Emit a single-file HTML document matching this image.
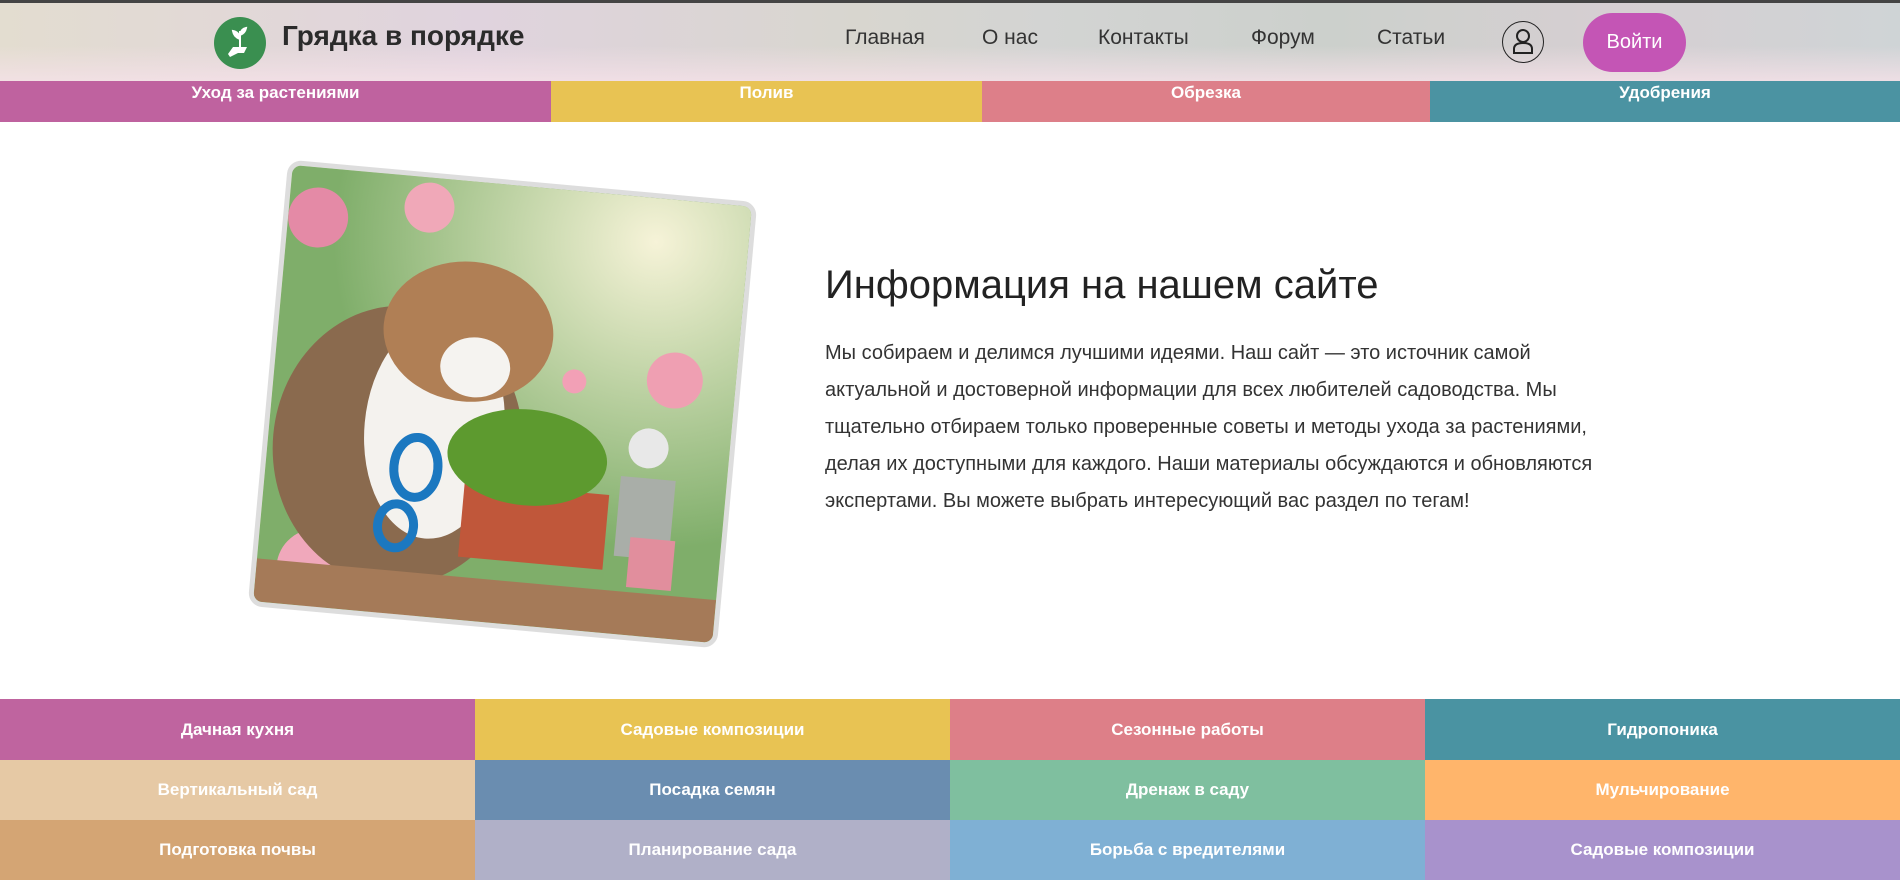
<!DOCTYPE html>
<html><head><meta charset="utf-8"><style>
*{margin:0;padding:0;box-sizing:border-box}
body{width:1900px;height:879px;overflow:hidden;background:#fff;font-family:"Liberation Sans","DejaVu Sans",sans-serif;position:relative}
.hdr{position:absolute;left:0;top:0;width:1900px;height:81px;border-top:3px solid #444;
background:linear-gradient(180deg,rgba(255,255,255,0) 55%,rgba(245,225,232,.8) 100%),linear-gradient(90deg,#e3ddd0 0%,#e0d3de 25%,#d8d6cf 45%,#d3d4d3 55%,#ccd0cc 70%,#d6cfd2 85%,#cfd4d6 100%)}
.logo{position:absolute;left:214px;top:17px;width:52px;height:52px;border-radius:50%;background:#3a8f50}
.brand{position:absolute;left:282px;top:20px;font-size:28px;font-weight:bold;color:#2b2b2b}
.nav{position:absolute;top:26px;font-size:21px;color:#333}
.user{position:absolute;left:1502px;top:21px;width:42px;height:42px;border-radius:50%;border:1.5px solid #222;z-index:2}
.btn{position:absolute;left:1583px;top:13px;width:103px;height:59px;border-radius:30px;background:#c455b5;color:#fff;font-size:20px;text-align:center;line-height:59px;z-index:2}
.tags{position:absolute;top:81px;left:0;height:41px;width:1900px;display:flex}
.tags div{height:41px;color:#fff;font-weight:bold;font-size:17px;text-align:center;line-height:24px}
.card{position:absolute;left:267px;top:180px;width:471px;height:448px;border:5px solid #ddd;border-radius:14px;transform:rotate(5.2deg);overflow:hidden;background:#9cbf7a}
h1{position:absolute;left:825px;top:263px;font-size:40px;font-weight:normal;color:#222}
p{position:absolute;left:825px;top:335px;width:792px;font-size:20px;line-height:37px;color:#333}
.grid{position:absolute;left:0;top:699px;width:1900px;display:grid;grid-template-columns:repeat(4,475px);grid-template-rows:61px 60px 60px}
.grid div{color:#fff;font-weight:bold;font-size:17px;display:flex;align-items:center;justify-content:center}
</style></head><body>
<div class="hdr"></div>
<div class="logo"><svg width="52" height="52" viewBox="0 0 52 52"><path d="M26 30 V14 M26 22 q-6-2-7-8 q6 1 7 8 M26 18 q5-2 6-7 q-5 1-6 7" stroke="#fff" stroke-width="2" fill="#fff"/><path d="M19 30 h14 l-3 6 h-6 l-8 4 l-2-3 z" fill="#fff"/></svg></div>
<div class="brand">Грядка в порядке</div>
<div class="nav" style="left:845px">Главная</div>
<div class="nav" style="left:982px">О нас</div>
<div class="nav" style="left:1098px">Контакты</div>
<div class="nav" style="left:1251px">Форум</div>
<div class="nav" style="left:1377px">Статьи</div>
<div class="user"><svg width="40" height="40" viewBox="0 0 40 40"><circle cx="20" cy="14" r="6" fill="none" stroke="#222" stroke-width="2"/><path d="M11 31 v-4 q0-6 9-6 q9 0 9 6 v4 z" fill="none" stroke="#222" stroke-width="2"/></svg></div>
<div class="btn">Войти</div>
<div class="tags">
<div style="width:551px;background:#bf629f">Уход за растениями</div>
<div style="width:431px;background:#e8c353">Полив</div>
<div style="width:448px;background:#dd7f89">Обрезка</div>
<div style="width:470px;background:#4b93a2">Удобрения</div>
</div>
<div class="card"><svg width="461" height="438" viewBox="0 0 461 438">
<defs><radialGradient id="l" cx="0.8" cy="0.1" r="0.7"><stop offset="0" stop-color="#f6f3d8"/><stop offset="1" stop-color="#7fae6a"/></radialGradient></defs>
<rect width="461" height="438" fill="url(#l)"/>
<circle cx="30" cy="50" r="30" fill="#e48aa6"/><circle cx="140" cy="30" r="25" fill="#f0a8b8"/><circle cx="400" cy="180" r="28" fill="#ef9fb2"/><circle cx="380" cy="250" r="20" fill="#e8e8e8"/><circle cx="300" cy="190" r="12" fill="#f2a0b6"/><circle cx="60" cy="400" r="40" fill="#f0a8bb"/><circle cx="140" cy="420" r="30" fill="#f6b6c4"/>
<ellipse cx="130" cy="270" rx="125" ry="140" fill="#8a6a4e"/><ellipse cx="165" cy="250" rx="70" ry="110" fill="#f4f2ee"/><ellipse cx="190" cy="150" rx="85" ry="70" fill="#b07f55"/><ellipse cx="200" cy="185" rx="35" ry="30" fill="#f5f3f0"/>
<rect x="0" y="395" width="461" height="43" fill="#a57a58"/>
<rect x="200" y="300" width="145" height="75" fill="#c0573a"/><ellipse cx="260" cy="270" rx="80" ry="48" fill="#5d9a2f"/>
<ellipse cx="150" cy="290" rx="22" ry="30" fill="none" stroke="#1b78c0" stroke-width="9"/><ellipse cx="135" cy="350" rx="18" ry="22" fill="none" stroke="#1b78c0" stroke-width="9"/>
<rect x="355" y="280" width="55" height="80" fill="#a9aea8"/><rect x="370" y="340" width="45" height="50" fill="#e18e9d"/>
</svg></div>
<h1>Информация на нашем сайте</h1>
<p>Мы собираем и делимся лучшими идеями. Наш сайт — это источник самой<br>актуальной и достоверной информации для всех любителей садоводства. Мы<br>тщательно отбираем только проверенные советы и методы ухода за растениями,<br>делая их доступными для каждого. Наши материалы обсуждаются и обновляются<br>экспертами. Вы можете выбрать интересующий вас раздел по тегам!</p>
<div class="grid">
<div style="background:#bf649f">Дачная кухня</div><div style="background:#e8c353">Садовые композиции</div><div style="background:#dd7f88">Сезонные работы</div><div style="background:#4a93a2">Гидропоника</div>
<div style="background:#e6c9a5">Вертикальный сад</div><div style="background:#6a8db0">Посадка семян</div><div style="background:#7fbf9f">Дренаж в саду</div><div style="background:#ffb56b">Мульчирование</div>
<div style="background:#d4a574">Подготовка почвы</div><div style="background:#b0b0c8">Планирование сада</div><div style="background:#7fb0d4">Борьба с вредителями</div><div style="background:#a892cc">Садовые композиции</div>
</div>
</body></html>
